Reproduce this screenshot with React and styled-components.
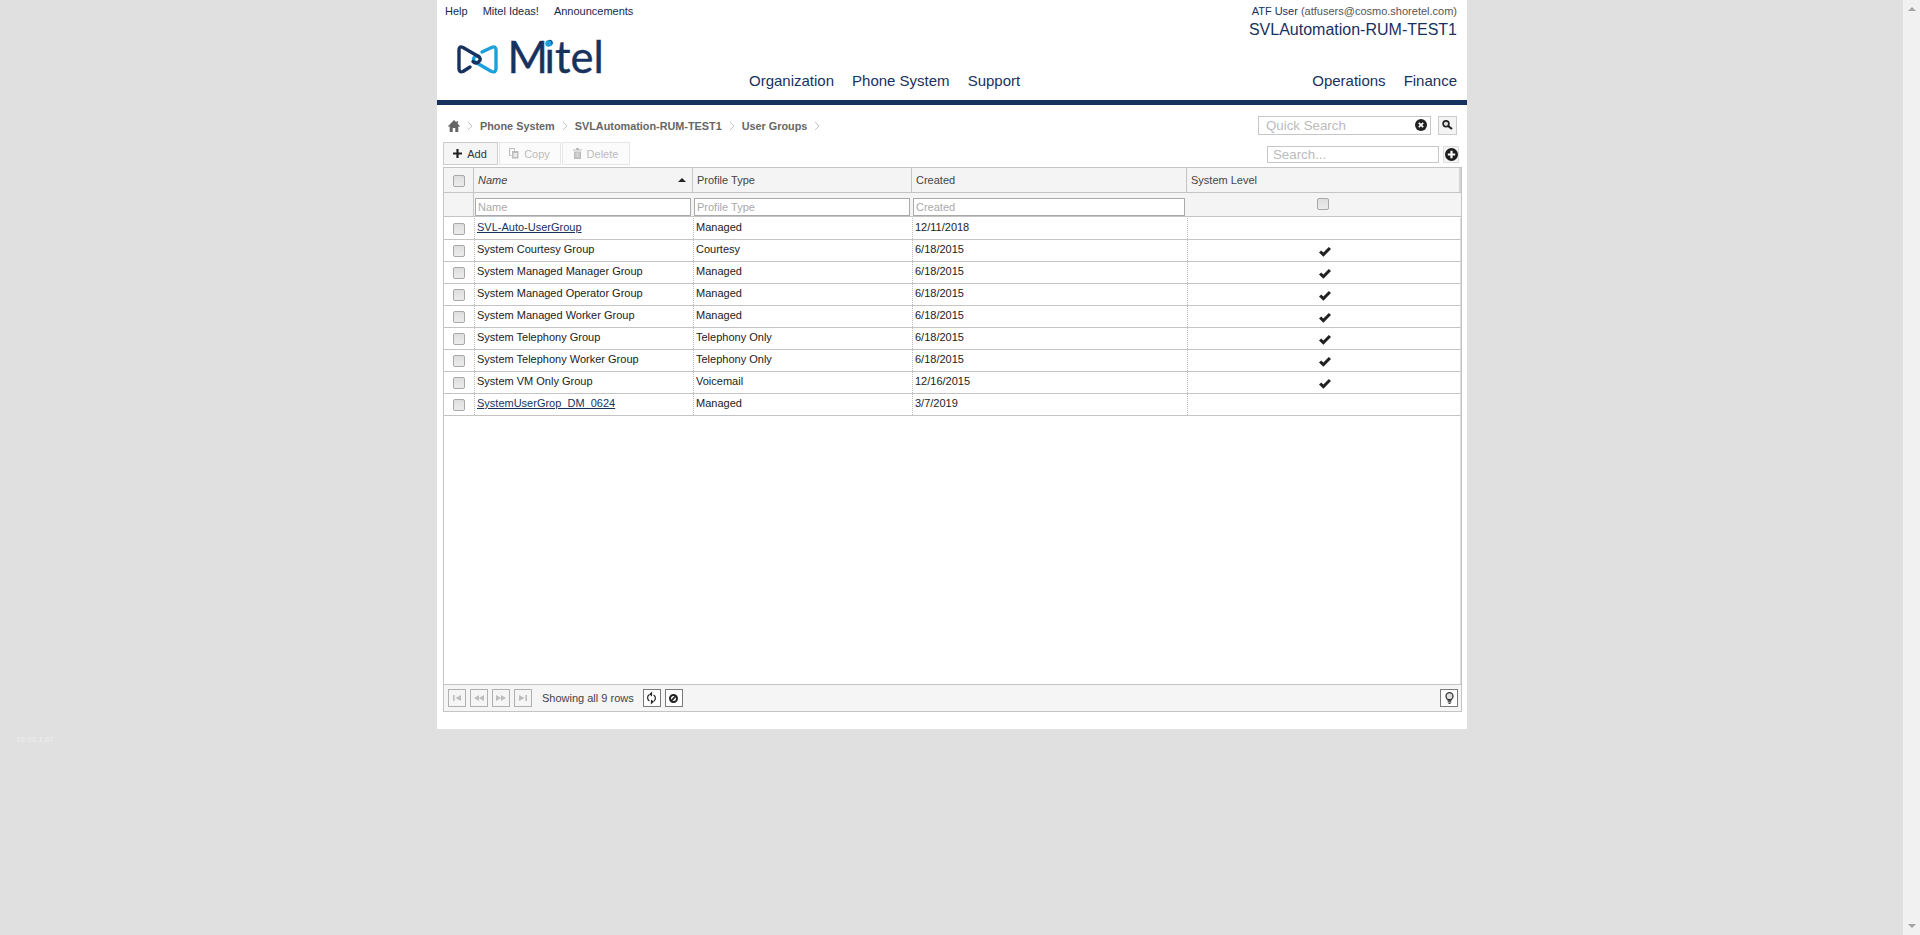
import React from "react";
import styled, { createGlobalStyle } from "styled-components";

const Global = createGlobalStyle`
  html, body { margin: 0; padding: 0; height: 100%; overflow: hidden; }
  body { background: #e0e0e0; font-family: "Liberation Sans", Arial, sans-serif; font-size: 11px; color: #222; }
  * { box-sizing: border-box; }
`;

const Viewport = styled.div`
  display: flex;
  height: 935px;
  width: 1920px;
`;
const Stage = styled.div`
  flex: 1;
  position: relative;
  display: flex;
  align-items: flex-start;
  padding-left: 437px;
`;
const ScrollTrack = styled.div`
  width: 17px;
  background: #f1f1f1;
  display: flex;
  flex-direction: column;
  justify-content: space-between;
  align-items: center;
  padding: 7px 0;
`;
const ScrollArrow = styled.div`
  width: 0;
  height: 0;
  border-left: 4px solid transparent;
  border-right: 4px solid transparent;
  ${p => p.$down ? "border-top: 4px solid #a3a3a3;" : "border-bottom: 4px solid #a3a3a3;"}
`;
const Version = styled.div`
  position: absolute;
  left: 16px;
  top: 734px;
  font-size: 8px;
  line-height: 11px;
  color: #eeeeee;
`;
const Page = styled.div`
  width: 1030px;
  height: 729px;
  background: #fff;
  display: flex;
  flex-direction: column;
`;
const Header = styled.header`
  height: 100px;
  display: flex;
  justify-content: space-between;
  padding: 0 10px 0 8px;
`;
const HeaderLeft = styled.div`
  display: flex;
  flex-direction: column;
`;
const TopLinks = styled.div`
  display: flex;
  gap: 15px;
  height: 21px;
  padding-top: 1px;
  align-items: center;
  font-size: 11px;
  color: #14294f;
`;
const LogoNav = styled.div`
  display: flex;
  align-items: flex-start;
`;
const LogoBox = styled.div`
  width: 304px;
  padding: 9px 0 0 11px;
`;
const Nav = styled.nav`
  display: flex;
  gap: 18px;
  font-size: 15px;
  line-height: 20px;
  color: #17325f;
  margin-top: 50px;
`;
const HeaderRight = styled.div`
  display: flex;
  flex-direction: column;
  align-items: flex-end;
`;
const UserLine = styled.div`
  height: 21px;
  line-height: 22px;
  font-size: 11px;
  color: #555;
  b { font-weight: normal; color: #17325f; }
`;
const Tenant = styled.div`
  font-size: 16px;
  line-height: 17px;
  color: #17325f;
`;
const RightNav = styled(Nav)`
  margin-top: 33px;
`;
const Rule = styled.div`
  height: 5px;
  background: #17325f;
  flex-shrink: 0;
`;
const CrumbRow = styled.div`
  height: 37px;
  display: flex;
  align-items: center;
  justify-content: space-between;
  padding: 3px 10px 0 11px;
`;
const Crumbs = styled.div`
  display: flex;
  align-items: center;
  font-size: 10.85px;
  font-weight: bold;
  color: #666;
  gap: 7px;
  padding-top: 2px;
`;
const QuickWrap = styled.div`
  display: flex;
  align-items: center;
  gap: 7px;
`;
const QuickBox = styled.div`
  width: 173px;
  height: 19px;
  border: 1px solid #c6c6c6;
  display: flex;
  align-items: center;
  justify-content: space-between;
  padding: 0 3px 0 7px;
  font-size: 13.3px;
  color: #bbb;
`;
const SmallSquare = styled.div`
  width: 19px;
  height: 19px;
  border: 1px solid #ccc;
  background: #f4f4f4;
  display: flex;
  align-items: center;
  justify-content: center;
`;
const ToolRow = styled.div`
  height: 25px;
  display: flex;
  justify-content: space-between;
  align-items: flex-start;
  padding: 0 8px 0 6px;
  flex-shrink: 0;
`;
const ToolLeft = styled.div`
  display: flex;
  gap: 1px;
`;
const ToolButton = styled.div`
  height: 23px;
  width: ${p => p.$w}px;
  display: flex;
  align-items: center;
  justify-content: center;
  gap: 5px;
  padding-right: 1px;
  font-size: 11px;
  border: 1px solid ${p => p.$off ? "#e6e6e6" : "#ccc"};
  background: ${p => p.$off ? "#fbfbfb" : "#f5f5f5"};
  color: ${p => p.$off ? "#bbb" : "#333"};
`;
const SearchWrap = styled.div`
  display: flex;
  align-items: center;
  gap: 4px;
  padding-top: 4px;
`;
const SearchInput = styled.div`
  width: 172px;
  height: 17px;
  border: 1px solid #c6c6c6;
  padding-left: 5px;
  font-size: 13.3px;
  line-height: 15px;
  color: #bbb;
`;
const PlusBox = styled.div`
  width: 16px;
  height: 17px;
  background: #f4f4f4;
  border: 1px solid #ddd;
  display: flex;
  align-items: center;
  justify-content: center;
`;
const Grid = styled.div`
  margin: 0 5px 0 6px;
  height: 545px;
  border: 1px solid #c4c4c4;
  display: flex;
  flex-direction: column;
`;
const COLS = "30px 219px 219px 275px 1fr";
const GridRowBase = styled.div`
  display: grid;
  grid-template-columns: ${COLS};
  flex-shrink: 0;
`;
const HeadRow = styled(GridRowBase)`
  height: 25px;
  background: #f4f4f4;
  border-bottom: 1px solid #c4c4c4;
`;
const HeadCell = styled.div`
  display: flex;
  align-items: center;
  justify-content: ${p => p.$center ? "center" : "space-between"};
  padding: ${p => p.$center ? "2px 0 0 0" : "0 6px 0 4px"};
  font-size: 11px;
  font-style: ${p => p.$italic ? "italic" : "normal"};
  color: #444;
  border-right: ${p => p.$last ? "2px solid #d4d4d4" : "1px solid #c4c4c4"};
`;
const FilterRow = styled(GridRowBase)`
  height: 24px;
  margin-bottom: 1px;
  background: #f4f4f4;
  border-bottom: 1px solid #c4c4c4;
`;
const FilterCell = styled.div`
  display: flex;
  align-items: flex-end;
  padding: 0 2px 0 1px;
  border-right: ${p => p.$line ? "1px solid #c4c4c4" : "none"};
`;
const FilterCheck = styled.div`
  display: flex;
  align-items: center;
  justify-content: center;
  padding: 0 3px 1px 0;
`;
const FilterInput = styled.div`
  width: 100%;
  height: 18px;
  background: #fff;
  border: 1px solid #aaa;
  padding-left: 2px;
  font-size: 11px;
  line-height: 16px;
  color: #aaa;
`;
const Row = styled(GridRowBase)`
  height: 22px;
  border-bottom: 1px solid #c4c4c4;
  border-right: 1px solid #dcdcdc;
  background: #fff;
`;
const Cell = styled.div`
  padding: 2px 0 0 2px;
  font-size: 11px;
  line-height: 14px;
  color: #222;
  border-left: 1px dotted #bbb;
`;
const CheckCell = styled.div`
  display: flex;
  justify-content: center;
  padding: 5px 0 0 0;
`;
const MarkCell = styled.div`
  display: flex;
  justify-content: center;
  padding: 7px 0 0 2px;
  border-left: 1px dotted #bbb;
`;
const RowLink = styled.a`
  color: #17325f;
  text-decoration: underline;
`;
const Box = styled.span`
  display: block;
  width: 12px;
  height: 12px;
  border: 1px solid #a8a8a8;
  border-radius: 2px;
  background: linear-gradient(#dedede, #ececec);
`;
const GridBody = styled.div`
  flex: 1;
  min-height: 0;
  border-right: 1px solid #dcdcdc;
`;
const Footer = styled.div`
  height: 27px;
  flex-shrink: 0;
  background: #f5f5f5;
  border-top: 1px solid #c4c4c4;
  display: flex;
  align-items: center;
  padding: 0 3px 0 4px;
  gap: 4px;
`;
const PagerButton = styled.div`
  width: 18px;
  height: 18px;
  border: 1px solid ${p => p.$on ? "#7a7a7a" : "#b0b0b0"};
  background: ${p => p.$on ? "#fff" : "#f5f5f5"};
  display: flex;
  align-items: center;
  justify-content: center;
`;
const RowCount = styled.span`
  margin: 0 5px 0 6px;
  font-size: 11px;
  color: #444;
`;
const Spacer = styled.div`
  flex: 1;
`;

const MitelLogo = () => (
  <svg width="160" height="58" viewBox="0 -10 160 58">
    <path d="M26 12 L35.5 7.5 Q40 5.5 40 10 L40 28.5 Q40 33 35.5 31.5 L20 22.5 Q16 19.5 18.5 17 Q20.5 15 23 16.5"
      fill="none" stroke="#1ba0dc" strokeWidth="3.4" strokeLinecap="round" strokeLinejoin="round" />
    <path d="M14 27 L7 31.5 Q3 33 3 28.5 L3 10 Q3 5.5 7 7.5 L22.5 16.5 Q26 19 22.5 22 Q19.5 24 17 21.5"
      fill="none" stroke="#17325f" strokeWidth="3.4" strokeLinecap="round" strokeLinejoin="round" />
    <text x="51.5" y="33" fontFamily="Lato, 'Open Sans', sans-serif" fontSize="43.5" fill="#17325f" stroke="#17325f" strokeWidth=".4">
      <tspan>M</tspan><tspan dx="-3">itel</tspan>
    </text>
    <circle cx="92.5" cy="3.5" r="3.2" fill="#1ba0dc" />
  </svg>
);
const Home = () => (
  <svg width="12" height="12" viewBox="0 0 14 12" preserveAspectRatio="none"><path d="M7 0 L0 6.2 L1.2 7 L2 6.3 V12 H5.5 V8 H8.5 V12 H12 V6.3 L12.8 7 L14 6.2 L11.5 4 V1 H10 V2.6 Z" fill="#666" /></svg>
);
const Chevron = () => (
  <svg width="6" height="10" viewBox="0 0 6 10"><path d="M1 1 L5 5 L1 9" fill="none" stroke="#c4c4c4" strokeWidth="1" /></svg>
);
const Plus = ({ c = "#222" }) => (
  <svg width="9" height="9" viewBox="0 0 9 9"><path d="M3.4 0h2.2v3.4H9v2.2H5.6V9H3.4V5.6H0V3.4h3.4z" fill={c} /></svg>
);
const CopyIcon = () => (
  <svg width="10" height="11" viewBox="0 0 10 11"><path d="M0.5 0.5h5v2M0.5 0.5v7h2" fill="none" stroke="#bbb" /><rect x="3" y="3" width="6.5" height="7.5" fill="#bbb" /><rect x="4.4" y="5" width="3.8" height="4" fill="#e9e9e9" /></svg>
);
const TrashIcon = () => (
  <svg width="9" height="11" viewBox="0 0 9 11"><path d="M0 1.5h3V0h3v1.5h3v1H0zM1 3.4h7V11H1z" fill="#bbb" /><path d="M3 4.5v5M4.5 4.5v5M6 4.5v5" stroke="#eee" strokeWidth=".6" /></svg>
);
const ClearIcon = () => (
  <svg width="12" height="12" viewBox="0 0 12 12"><circle cx="6" cy="6" r="6" fill="#222" /><path d="M3.8 3.8l4.4 4.4M8.2 3.8l-4.4 4.4" stroke="#fff" strokeWidth="1.7" /></svg>
);
const Magnifier = () => (
  <svg width="11" height="10" viewBox="0 0 11 10"><circle cx="4" cy="3.8" r="2.9" fill="#ddd" stroke="#222" strokeWidth="1.6" /><path d="M6 5.8l4 3.2" stroke="#222" strokeWidth="2.2" /></svg>
);
const CirclePlus = () => (
  <svg width="13" height="13" viewBox="0 0 13 13"><circle cx="6.5" cy="6.5" r="6.5" fill="#1c1c1c" /><path d="M5.4 2.8h2.2v2.6h2.6v2.2H7.6v2.6H5.4V7.6H2.8V5.4h2.6z" fill="#fff" /></svg>
);
const Check = () => (
  <svg width="12" height="10" viewBox="0 0 12 10"><path d="M0 5.4 L2.2 3.4 L4.4 5.4 L9.8 0 L12 2 L4.4 9.8 Z" fill="#222" /></svg>
);
const Sort = () => (
  <svg width="8" height="4" viewBox="0 0 8 4"><path d="M0 4 L4 0 L8 4Z" fill="#222" /></svg>
);
const Pager = ({ kind }) => {
  const c = "#bdbdbd";
  const wide = kind === "prev" || kind === "next";
  const shapes = {
    first: <><rect x="0" y="1" width="1.6" height="6" fill={c} /><path d="M8 1v6L2.5 4z" fill={c} /></>,
    prev: <path d="M5 1v6L0 4zM10 1v6L5 4z" fill={c} />,
    next: <path d="M0 1v6l5-3zM5 1v6l5-3z" fill={c} />,
    last: <><path d="M0 1v6l5.5-3z" fill={c} /><rect x="6.4" y="1" width="1.6" height="6" fill={c} /></>,
  };
  return <PagerButton><svg width={wide ? 10 : 8} height="8" viewBox={`0 0 ${wide ? 10 : 8} 8`}>{shapes[kind]}</svg></PagerButton>;
};
const RefreshIcon = () => (
  <svg width="11" height="14" viewBox="0 0 11 14"><path d="M3.4 3.4 A3.9 3.9 0 0 0 3.4 10 M7.6 4 A3.9 3.9 0 0 1 7.6 10.6" fill="none" stroke="#222" strokeWidth="1.2" /><path d="M6.2 0.6 L3.2 3.2 L6 5.4ZM4.8 13.4 L7.8 10.8 L5 8.6Z" fill="#222" /></svg>
);
const BanIcon = () => (
  <svg width="9" height="9" viewBox="0 0 9 9"><circle cx="4.5" cy="4.5" r="3.5" fill="none" stroke="#222" strokeWidth="2" /><path d="M2.2 6.8L6.8 2.2" stroke="#222" strokeWidth="1.7" /></svg>
);
const BulbIcon = () => (
  <svg width="9" height="12" viewBox="0 0 9 12"><circle cx="4.5" cy="4.2" r="3.5" fill="#ddd" stroke="#333" strokeWidth="1.3" /><rect x="2.6" y="7.4" width="3.8" height="1.4" fill="#333" /><rect x="2.6" y="9.2" width="3.8" height="1.2" fill="#333" /><rect x="3.5" y="10.8" width="2" height="1.2" fill="#333" /></svg>
);

const rows = [
  ["SVL-Auto-UserGroup", "Managed", "12/11/2018", false, true],
  ["System Courtesy Group", "Courtesy", "6/18/2015", true],
  ["System Managed Manager Group", "Managed", "6/18/2015", true],
  ["System Managed Operator Group", "Managed", "6/18/2015", true],
  ["System Managed Worker Group", "Managed", "6/18/2015", true],
  ["System Telephony Group", "Telephony Only", "6/18/2015", true],
  ["System Telephony Worker Group", "Telephony Only", "6/18/2015", true],
  ["System VM Only Group", "Voicemail", "12/16/2015", true],
  ["SystemUserGrop_DM_0624", "Managed", "3/7/2019", false, true],
];

export default function App() {
  return (
    <Viewport>
      <Global />
      <Stage>
        <Version>19.03.1.67</Version>
        <Page>
          <Header>
            <HeaderLeft>
              <TopLinks><span>Help</span><span>Mitel Ideas!</span><span>Announcements</span></TopLinks>
              <LogoNav>
                <LogoBox><MitelLogo /></LogoBox>
                <Nav><span>Organization</span><span>Phone System</span><span>Support</span></Nav>
              </LogoNav>
            </HeaderLeft>
            <HeaderRight>
              <UserLine><b>ATF User</b> (atfusers@cosmo.shoretel.com)</UserLine>
              <Tenant>SVLAutomation-RUM-TEST1</Tenant>
              <RightNav><span>Operations</span><span>Finance</span></RightNav>
            </HeaderRight>
          </Header>
          <Rule />
          <CrumbRow>
            <Crumbs>
              <Home /><Chevron />
              <span>Phone System</span><Chevron />
              <span>SVLAutomation-RUM-TEST1</span><Chevron />
              <span>User Groups</span><Chevron />
            </Crumbs>
            <QuickWrap>
              <QuickBox><span>Quick Search</span><ClearIcon /></QuickBox>
              <SmallSquare><Magnifier /></SmallSquare>
            </QuickWrap>
          </CrumbRow>
          <ToolRow>
            <ToolLeft>
              <ToolButton $w={55}><Plus /> Add</ToolButton>
              <ToolButton $w={62} $off><CopyIcon /> Copy</ToolButton>
              <ToolButton $w={68} $off><TrashIcon /> Delete</ToolButton>
            </ToolLeft>
            <SearchWrap>
              <SearchInput>Search...</SearchInput>
              <PlusBox><CirclePlus /></PlusBox>
            </SearchWrap>
          </ToolRow>
          <Grid>
            <HeadRow>
              <HeadCell $center><Box /></HeadCell>
              <HeadCell $italic>Name<Sort /></HeadCell>
              <HeadCell>Profile Type</HeadCell>
              <HeadCell>Created</HeadCell>
              <HeadCell $last>System Level</HeadCell>
            </HeadRow>
            <FilterRow>
              <FilterCell $line />
              <FilterCell><FilterInput>Name</FilterInput></FilterCell>
              <FilterCell><FilterInput>Profile Type</FilterInput></FilterCell>
              <FilterCell><FilterInput>Created</FilterInput></FilterCell>
              <FilterCheck><Box /></FilterCheck>
            </FilterRow>
            {rows.map(([name, type, created, sys, link]) => (
              <Row key={name}>
                <CheckCell><Box /></CheckCell>
                <Cell>{link ? <RowLink>{name}</RowLink> : name}</Cell>
                <Cell>{type}</Cell>
                <Cell>{created}</Cell>
                <MarkCell>{sys && <Check />}</MarkCell>
              </Row>
            ))}
            <GridBody />
            <Footer>
              <Pager kind="first" />
              <Pager kind="prev" />
              <Pager kind="next" />
              <Pager kind="last" />
              <RowCount>Showing all 9 rows</RowCount>
              <PagerButton $on><RefreshIcon /></PagerButton>
              <PagerButton $on><BanIcon /></PagerButton>
              <Spacer />
              <PagerButton $on><BulbIcon /></PagerButton>
            </Footer>
          </Grid>
        </Page>
      </Stage>
      <ScrollTrack>
        <ScrollArrow />
        <ScrollArrow $down />
      </ScrollTrack>
    </Viewport>
  );
}
